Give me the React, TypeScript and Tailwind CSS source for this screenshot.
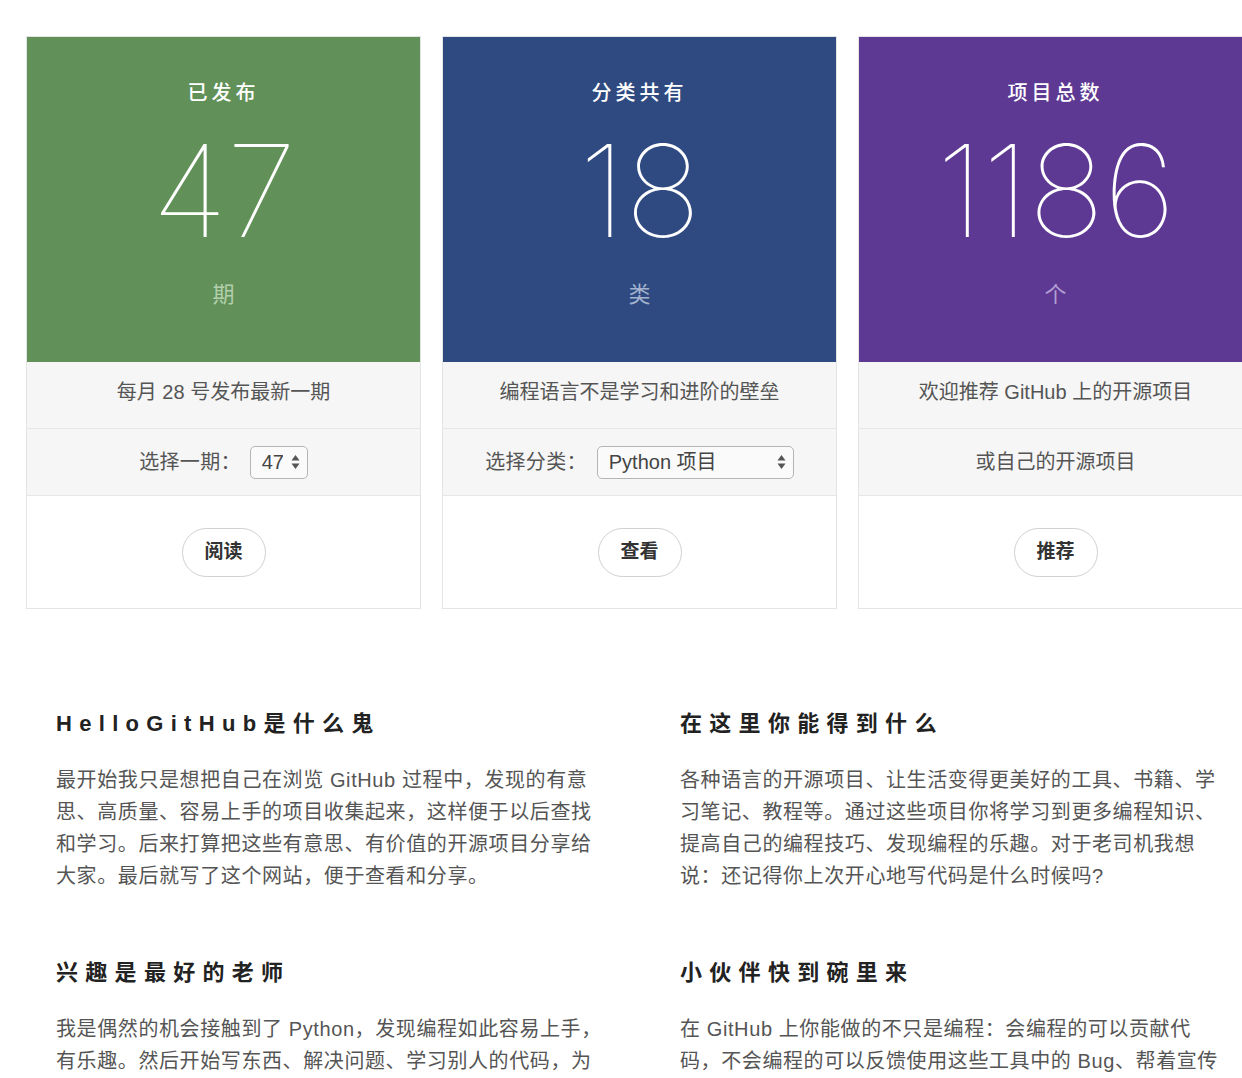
import React from "react";

const sans = "font-['Liberation_Sans','Noto_Sans_CJK_SC',sans-serif]";

function Arrows() {
  return (
    <svg width="9" height="16" viewBox="0 0 9 16" className="pointer-events-none absolute right-[8px] top-1/2 -translate-y-1/2">
      <path d="M4.5 1 L8.5 6.5 L0.5 6.5 Z" fill="#555" />
      <path d="M4.5 15 L8.5 9.5 L0.5 9.5 Z" fill="#555" />
    </svg>
  );
}

function Select({ value, width, options }: { value: string; width: string; options: string[] }) {
  return (
    <div className={`relative ${width}`}>
      <select
        defaultValue={value}
        className={`h-[33px] w-full appearance-none rounded-[5px] border border-[#b5b5b5] bg-[#fafafa] pl-[11px] pr-6 text-[20px] text-[#444] outline-none ${sans}`}
      >
        {options.map((o) => (
          <option key={o}>{o}</option>
        ))}
      </select>
      <Arrows />
    </div>
  );
}

type Stat = {
  title: string;
  num: string;
  unit: string;
  bg: string;
  unitColor: string;
  note: string;
  row: React.ReactNode;
  action: string;
};

const stats: Stat[] = [
  {
    title: "已发布",
    num: "47",
    unit: "期",
    bg: "bg-[#619159]",
    unitColor: "text-[#b3cfac]",
    note: "每月 28 号发布最新一期",
    row: (
      <div className="flex items-center gap-[9px]">
        <span className="tracking-[0.3px]">选择一期：</span>
        <Select value="47" width="w-[58px]" options={["47", "46", "45", "44"]} />
      </div>
    ),
    action: "阅读",
  },
  {
    title: "分类共有",
    num: "18",
    unit: "类",
    bg: "bg-[#2e4a80]",
    unitColor: "text-[#a4b2cf]",
    note: "编程语言不是学习和进阶的壁垒",
    row: (
      <div className="flex items-center gap-[10px]">
        <span className="tracking-[0.3px]">选择分类：</span>
        <Select value="Python 项目" width="w-[197px]" options={["Python 项目", "Java 项目", "C 项目", "Go 项目"]} />
      </div>
    ),
    action: "查看",
  },
  {
    title: "项目总数",
    num: "1186",
    unit: "个",
    bg: "bg-[#5d3993]",
    unitColor: "text-[#b39fd3]",
    note: "欢迎推荐 GitHub 上的开源项目",
    row: <span>或自己的开源项目</span>,
    action: "推荐",
  },
];

const sections = [
  {
    title: "HelloGitHub是什么鬼",
    body: "最开始我只是想把自己在浏览 GitHub 过程中，发现的有意思、高质量、容易上手的项目收集起来，这样便于以后查找和学习。后来打算把这些有意思、有价值的开源项目分享给大家。最后就写了这个网站，便于查看和分享。",
  },
  {
    title: "在这里你能得到什么",
    body: "各种语言的开源项目、让生活变得更美好的工具、书籍、学习笔记、教程等。通过这些项目你将学习到更多编程知识、提高自己的编程技巧、发现编程的乐趣。对于老司机我想说：还记得你上次开心地写代码是什么时候吗?",
  },
  {
    title: "兴趣是最好的老师",
    body: "我是偶然的机会接触到了 Python，发现编程如此容易上手，有乐趣。然后开始写东西、解决问题、学习别人的代码，为了能让更多的人感受到编程的乐趣，我做了 HelloGitHub。",
  },
  {
    title: "小伙伴快到碗里来",
    body: "在 GitHub 上你能做的不只是编程：会编程的可以贡献代码，不会编程的可以反馈使用这些工具中的 Bug、帮着宣传你觉得优秀的项目，一起让开源社区变得更好。",
  },
];

export default function App() {
  return (
    <div className={`h-[1078px] w-[1242px] overflow-hidden bg-white ${sans}`}>
      <div className="flex w-[1300px] gap-[21px] pl-[26px] pt-[36px]">
        {stats.map((s) => (
          <div key={s.title} className="flex w-[395px] shrink-0 flex-col border border-[#e4e4e4]">
            <div className={`flex h-[325px] flex-col items-center text-white ${s.bg}`}>
              <div className="mt-[42px] text-[20px] font-medium leading-[28px] tracking-[4px]">{s.title}</div>
              <div className="mt-[18px] font-['Inter',sans-serif] text-[128px] font-thin leading-[132px] tracking-[-1px]">
                {s.num}
              </div>
              <div className={`mt-[23px] text-[22px] leading-[30px] ${s.unitColor}`}>{s.unit}</div>
            </div>
            <div className="flex h-[67px] items-center justify-center border-b border-[#e6e6e6] bg-[#f6f6f6] pb-[6px] text-[20px] text-[#555]">
              {s.note}
            </div>
            <div className="flex h-[67px] items-center justify-center border-b border-[#e6e6e6] bg-[#f6f6f6] text-[20px] text-[#555]">
              {s.row}
            </div>
            <div className="flex h-[112px] items-center justify-center">
              <button className="h-[49px] w-[84px] rounded-full border border-[#d0d0d0] bg-white text-[19px] font-bold text-[#333]">
                {s.action}
              </button>
            </div>
          </div>
        ))}
      </div>

      <div className="mt-[100px] grid w-[1260px] grid-cols-[548px_548px] gap-x-[76px] gap-y-[66px] pl-[56px]">
        {sections.map((sec) => (
          <div key={sec.title}>
            <h3 className="text-[22px] font-bold leading-[30px] tracking-[7.3px] text-[#222]">{sec.title}</h3>
            <p className="mt-[25px] text-[20px] leading-[32px] tracking-[0.6px] text-[#555]">{sec.body}</p>
          </div>
        ))}
      </div>
    </div>
  );
}
